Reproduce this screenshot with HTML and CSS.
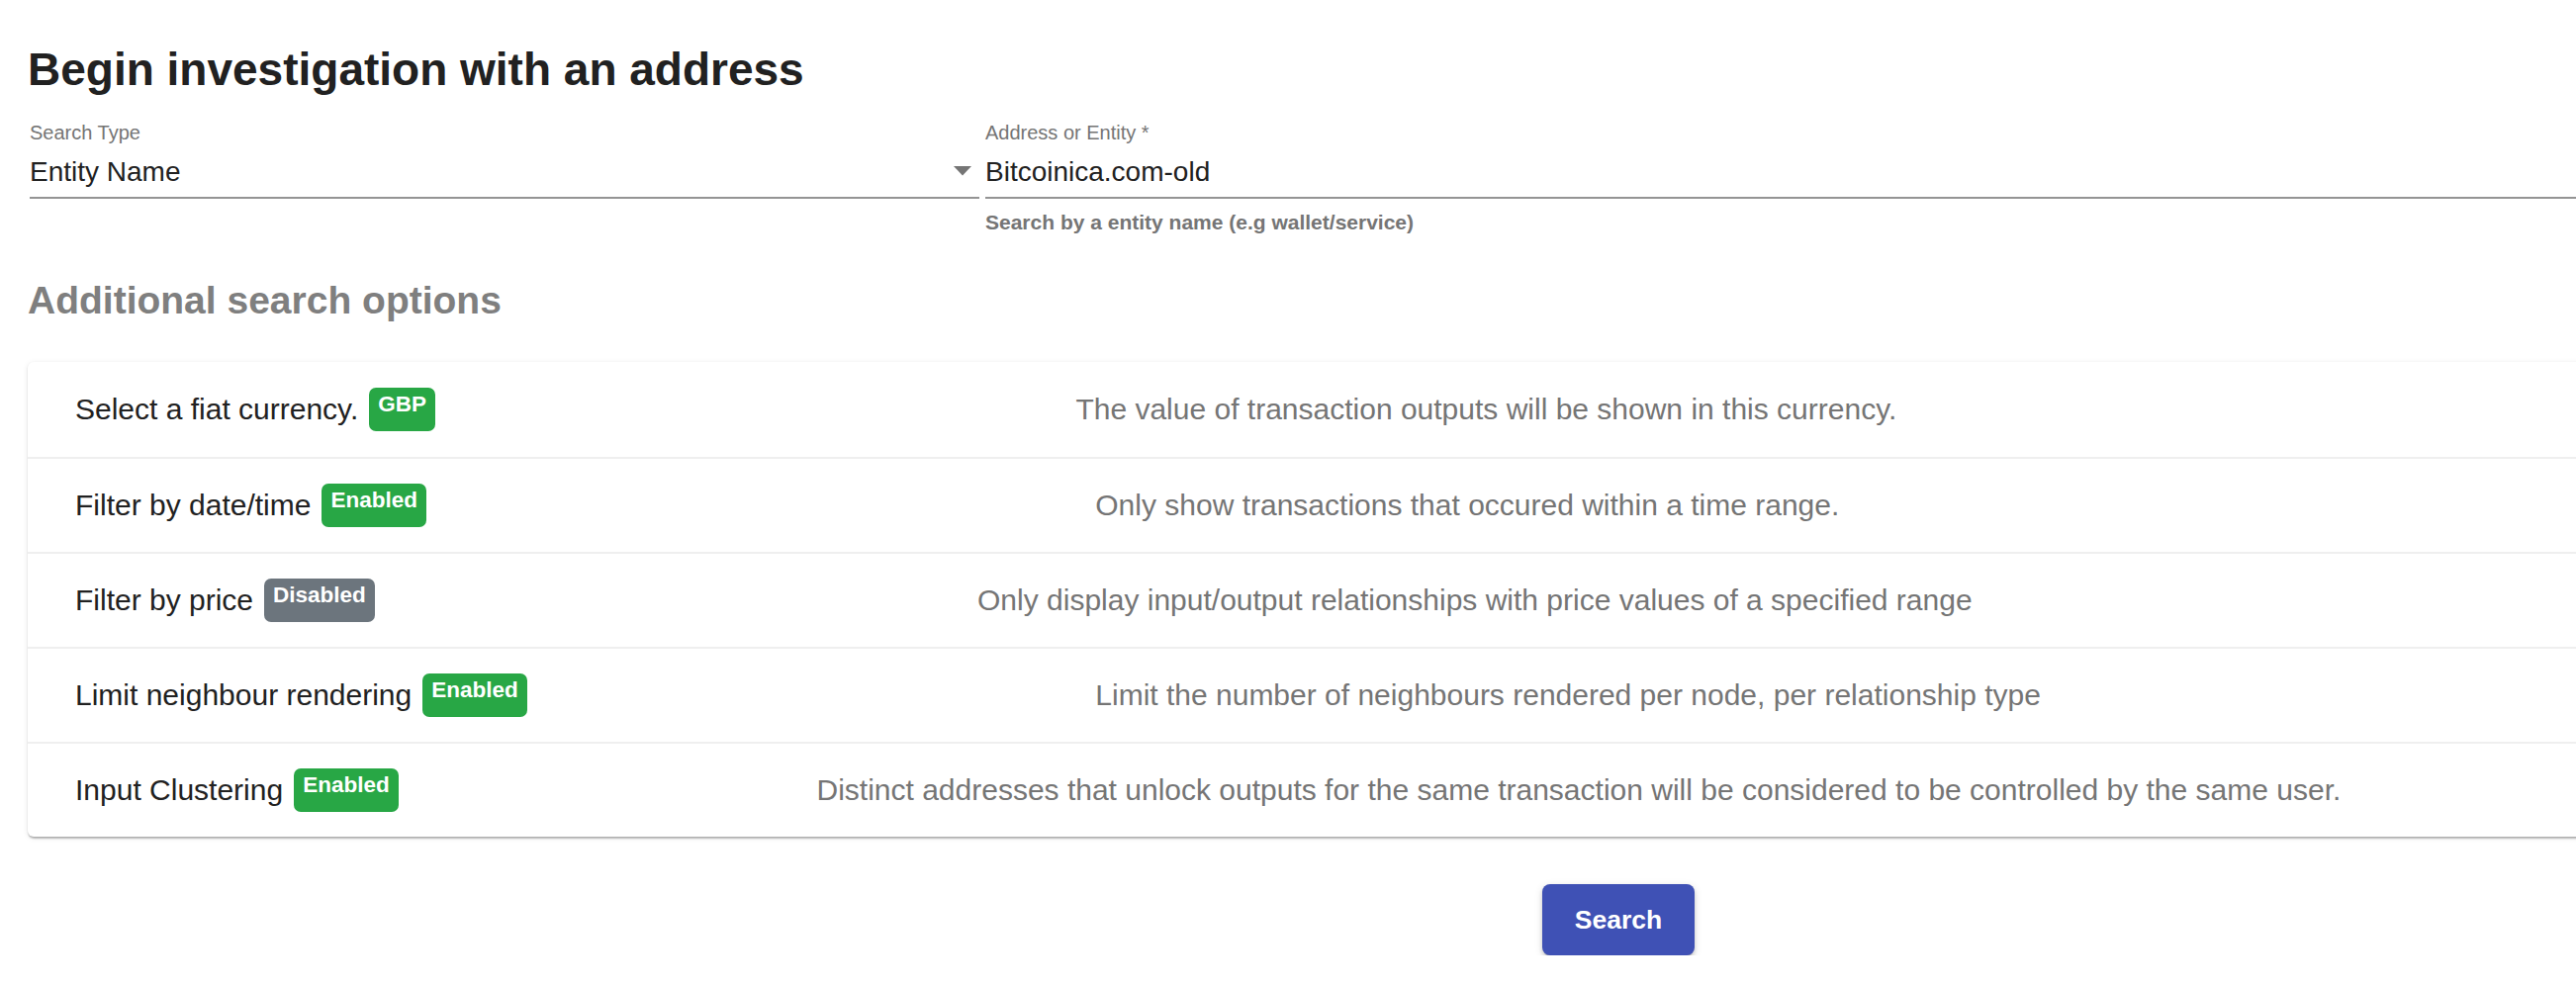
FILE: index.html
```html
<!DOCTYPE html>
<html lang="en">
<head>
<meta charset="utf-8">
<title>Begin investigation with an address</title>
<link rel="stylesheet" href="styles.css">
</head>
<body>
<div class="page">
  <h1 class="title">Begin investigation with an address</h1>

  <div class="fields">
    <div class="field select-field">
      <label class="field-label">Search Type</label>
      <div class="field-input">
        <span class="field-value">Entity Name</span>
        <svg class="dropdown-icon" width="18" height="10" viewBox="0 0 18 10" aria-hidden="true"><polygon points="0,0 18,0 9,9.5" fill="#757575"/></svg>
      </div>
    </div>
    <div class="field address-field">
      <label class="field-label">Address or Entity *</label>
      <div class="field-input">
        <span class="field-value">Bitcoinica.com-old</span>
      </div>
      <p class="helper">Search by a entity name (e.g wallet/service)</p>
    </div>
  </div>

  <h2 class="section-title">Additional search options</h2>

  <div class="options-card">
    <div class="option-row">
      <div class="option-label"><span class="option-name">Select a fiat currency.</span><span class="badge badge-success">GBP</span></div>
      <span class="option-desc">The value of transaction outputs will be shown in this currency.</span>
      <span class="option-end"></span>
    </div>
    <div class="option-row">
      <div class="option-label"><span class="option-name">Filter by date/time</span><span class="badge badge-success">Enabled</span></div>
      <span class="option-desc">Only show transactions that occured within a time range.</span>
      <span class="option-end"></span>
    </div>
    <div class="option-row">
      <div class="option-label"><span class="option-name">Filter by price</span><span class="badge badge-secondary">Disabled</span></div>
      <span class="option-desc">Only display input/output relationships with price values of a specified range</span>
      <span class="option-end"></span>
    </div>
    <div class="option-row">
      <div class="option-label"><span class="option-name">Limit neighbour rendering</span><span class="badge badge-success">Enabled</span></div>
      <span class="option-desc">Limit the number of neighbours rendered per node, per relationship type</span>
      <span class="option-end"></span>
    </div>
    <div class="option-row">
      <div class="option-label"><span class="option-name">Input Clustering</span><span class="badge badge-success">Enabled</span></div>
      <span class="option-desc">Distinct addresses that unlock outputs for the same transaction will be considered to be controlled by the same user.</span>
      <span class="option-end"></span>
    </div>
  </div>

  <div class="actions">
    <button class="search-btn" type="button">Search</button>
  </div>
</div>
</body>
</html>
```

FILE: styles.css
```css
html, body {
  margin: 0;
  padding: 0;
  overflow: hidden;
  background: #ffffff;
}

body {
  font-family: "Liberation Sans", Arial, Helvetica, sans-serif;
  color: #212121;
}

.page {
  width: 3216px;
  padding: 42px 0 0 28px;
}

.title {
  margin: 0;
  font-size: 46px;
  line-height: 56px;
  font-weight: 700;
  color: #212121;
}

.fields {
  display: flex;
  gap: 6px;
  margin-top: 24px;
  margin-left: 2px;
}

.select-field {
  width: 960px;
  flex: 0 0 auto;
}

.address-field {
  flex: 1 1 auto;
}

.field-label {
  display: block;
  font-size: 20px;
  line-height: 24px;
  color: #757575;
}

.field-input {
  display: flex;
  align-items: center;
  margin-top: 11px;
  padding-bottom: 8px;
  border-bottom: 2px solid #949494;
}

.field-value {
  flex: 1 1 auto;
  font-size: 28px;
  line-height: 34px;
  color: #212121;
}

.dropdown-icon {
  flex: 0 0 auto;
  margin-right: 8px;
  margin-top: -3px;
}

.helper {
  margin: 11px 0 0;
  font-size: 21px;
  line-height: 25px;
  font-weight: 700;
  color: #757575;
}

.section-title {
  margin: 44px 0 0;
  font-size: 39px;
  line-height: 46px;
  font-weight: 700;
  color: #7f7f7f;
}

.options-card {
  margin-top: 39px;
  background: #ffffff;
  border-radius: 6px;
  box-shadow: 0 3px 2px -1px rgba(0, 0, 0, 0.22), 0 1px 2px 0 rgba(0, 0, 0, 0.12), 0 1px 6px 0 rgba(0, 0, 0, 0.08);
}

.option-row {
  display: flex;
  align-items: center;
  box-sizing: border-box;
  height: 96px;
  padding: 0 32px 0 48px;
  white-space: nowrap;
}

.option-row + .option-row {
  border-top: 2px solid #efefef;
}

.option-label {
  display: flex;
  align-items: center;
  gap: 11px;
}

.option-name {
  font-size: 30px;
  line-height: 36px;
  color: #212121;
}

.badge {
  display: inline-block;
  font-size: 22.5px;
  line-height: 1;
  font-weight: 700;
  color: #ffffff;
  padding: 6px 9px 16px;
  border-radius: 7px;
}

.badge-success {
  background: #28a745;
}

.badge-secondary {
  background: #6c757d;
}

.option-desc {
  margin: 0 auto;
  font-size: 30px;
  line-height: 36px;
  color: #757575;
}

.option-end {
  margin-left: auto;
  width: 0;
}

.actions {
  display: flex;
  justify-content: center;
  margin-top: 48px;
}

.search-btn {
  width: 154px;
  height: 72px;
  border: none;
  border-radius: 8px;
  background: #3f51b5;
  color: #ffffff;
  font-family: "Liberation Sans", Arial, Helvetica, sans-serif;
  font-size: 26.5px;
  font-weight: 700;
  padding: 0;
  box-shadow: 0 5px 2px -3px rgba(0, 0, 0, 0.2), 0 3px 4px 0 rgba(0, 0, 0, 0.14), 0 2px 9px 0 rgba(0, 0, 0, 0.12);
  cursor: pointer;
}
```
